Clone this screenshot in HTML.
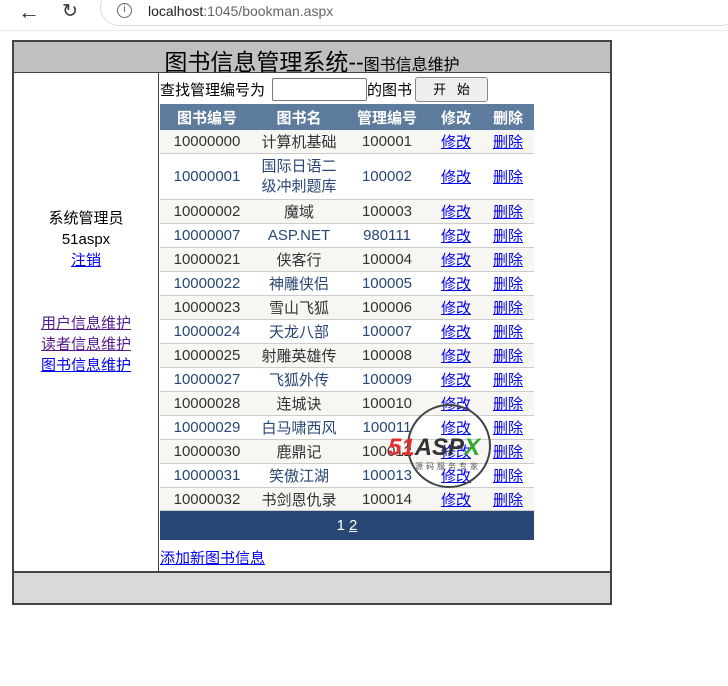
<!DOCTYPE html>
<html><head><meta charset="utf-8"><style>
*{margin:0;padding:0;box-sizing:border-box}
body{width:728px;height:686px;background:#fff;font-family:"Liberation Sans","Noto Sans CJK SC",sans-serif;font-size:15px;position:relative;overflow:hidden;color:#000}
.a{position:absolute}
a{color:#0000ee;text-decoration:underline}
.v{color:#551a8b}
.r{position:absolute;left:160px;width:374px;border-bottom:1px solid #ccc;display:flex;align-items:center}
.r span{display:block;text-align:center}
.c1{width:94px}.c2{width:90px;padding:0 4px}.c3{width:86px}.c4{width:52px}.c5{width:52px}
.o{background:#f7f6f3;color:#333}.e{background:#fff;color:#284775}
</style></head><body>
<div class="a" style="left:0;top:0;width:728px;height:30px;background:#fff"></div>
<div class="a" style="left:18px;top:-1px;font-size:22px;color:#333">&#8592;</div>
<div class="a" style="left:62px;top:0;font-size:19px;color:#333">&#8635;</div>
<div class="a" style="left:100px;top:-12px;width:640px;height:38px;border:1px solid #ddd;border-radius:19px;background:#fff"></div>
<div class="a" style="left:117px;top:3px;width:15px;height:15px;border:1.5px solid #666;border-radius:50%;font-size:10px;text-align:center;line-height:12px;color:#666">i</div>
<div class="a" style="left:148px;top:3px;font-size:14px;color:#222">localhost<span style="color:#666">:1045/bookman.aspx</span></div>
<div class="a" style="left:0;top:30px;width:728px;height:1px;background:#e8e8e8"></div>

<div class="a" style="left:12px;top:40px;width:600px;height:565px;border:2px solid #444;background:#fff"></div>
<div class="a" style="left:14px;top:42px;width:596px;height:31px;background:#c0c0c0;border-bottom:1px solid #444"></div>
<div class="a" style="left:14px;top:43px;width:596px;text-align:center;font-size:23px">图书信息管理系统--<span style="font-size:16px">图书信息维护</span></div>
<div class="a" style="left:158px;top:73px;width:1px;height:499px;background:#444"></div>
<div class="a" style="left:14px;top:571px;width:596px;height:32px;background:#d9d9d9;border-top:2px solid #444"></div>

<div class="a" style="left:14px;top:208px;width:144px;text-align:center;line-height:21px">系统管理员<br>51aspx<br><a href="#">注销</a></div>
<div class="a" style="left:14px;top:313px;width:144px;text-align:center;line-height:21px"><a class="v" href="#">用户信息维护</a><br><a class="v" href="#">读者信息维护</a><br><a href="#">图书信息维护</a></div>

<div class="a" style="left:160px;top:79px">查找管理编号为</div>
<div class="a" style="left:272px;top:78px;width:95px;height:23px;border:1px solid #777;border-radius:2px"></div>
<div class="a" style="left:367px;top:79px">的图书</div>
<div class="a" style="left:415px;top:77px;width:73px;height:25px;border:1px solid #888;border-radius:3px;background:#efefef;font-size:13px;text-align:center;line-height:23px">开&nbsp;&nbsp;&nbsp;始</div>

<div class="r" style="top:104px;height:26px;background:#5d7b9d;color:#fff;font-weight:bold;border:none"><span class="c1">图书编号</span><span class="c2">图书名</span><span class="c3">管理编号</span><span class="c4">修改</span><span class="c5">删除</span></div>
<div class="r o" style="top:130px;height:24px"><span class="c1">10000000</span><span class="c2">计算机基础</span><span class="c3">100001</span><span class="c4"><a href="#">修改</a></span><span class="c5"><a href="#">删除</a></span></div>
<div class="r e" style="top:154px;height:46px"><span class="c1">10000001</span><span class="c2" style="line-height:20px;padding:0 6px">国际日语二级冲刺题库</span><span class="c3">100002</span><span class="c4"><a href="#">修改</a></span><span class="c5"><a href="#">删除</a></span></div>
<div class="r o" style="top:200px;height:24px"><span class="c1">10000002</span><span class="c2">魔域</span><span class="c3">100003</span><span class="c4"><a href="#">修改</a></span><span class="c5"><a href="#">删除</a></span></div>
<div class="r e" style="top:224px;height:24px"><span class="c1">10000007</span><span class="c2">ASP.NET</span><span class="c3">980111</span><span class="c4"><a href="#">修改</a></span><span class="c5"><a href="#">删除</a></span></div>
<div class="r o" style="top:248px;height:24px"><span class="c1">10000021</span><span class="c2">侠客行</span><span class="c3">100004</span><span class="c4"><a href="#">修改</a></span><span class="c5"><a href="#">删除</a></span></div>
<div class="r e" style="top:272px;height:24px"><span class="c1">10000022</span><span class="c2">神雕侠侣</span><span class="c3">100005</span><span class="c4"><a href="#">修改</a></span><span class="c5"><a href="#">删除</a></span></div>
<div class="r o" style="top:296px;height:24px"><span class="c1">10000023</span><span class="c2">雪山飞狐</span><span class="c3">100006</span><span class="c4"><a href="#">修改</a></span><span class="c5"><a href="#">删除</a></span></div>
<div class="r e" style="top:320px;height:24px"><span class="c1">10000024</span><span class="c2">天龙八部</span><span class="c3">100007</span><span class="c4"><a href="#">修改</a></span><span class="c5"><a href="#">删除</a></span></div>
<div class="r o" style="top:344px;height:24px"><span class="c1">10000025</span><span class="c2">射雕英雄传</span><span class="c3">100008</span><span class="c4"><a href="#">修改</a></span><span class="c5"><a href="#">删除</a></span></div>
<div class="r e" style="top:368px;height:24px"><span class="c1">10000027</span><span class="c2">飞狐外传</span><span class="c3">100009</span><span class="c4"><a href="#">修改</a></span><span class="c5"><a href="#">删除</a></span></div>
<div class="r o" style="top:392px;height:24px"><span class="c1">10000028</span><span class="c2">连城诀</span><span class="c3">100010</span><span class="c4"><a href="#">修改</a></span><span class="c5"><a href="#">删除</a></span></div>
<div class="r e" style="top:416px;height:24px"><span class="c1">10000029</span><span class="c2">白马啸西风</span><span class="c3">100011</span><span class="c4"><a href="#">修改</a></span><span class="c5"><a href="#">删除</a></span></div>
<div class="r o" style="top:440px;height:24px"><span class="c1">10000030</span><span class="c2">鹿鼎记</span><span class="c3">100012</span><span class="c4"><a href="#">修改</a></span><span class="c5"><a href="#">删除</a></span></div>
<div class="r e" style="top:464px;height:24px"><span class="c1">10000031</span><span class="c2">笑傲江湖</span><span class="c3">100013</span><span class="c4"><a href="#">修改</a></span><span class="c5"><a href="#">删除</a></span></div>
<div class="r o" style="top:488px;height:23px"><span class="c1">10000032</span><span class="c2">书剑恩仇录</span><span class="c3">100014</span><span class="c4"><a href="#">修改</a></span><span class="c5"><a href="#">删除</a></span></div>
<div class="r" style="top:511px;height:29px;background:#284775;color:#fff;justify-content:center;border:none">1 <u style="margin-left:4px">2</u></div>

<div class="a" style="left:407px;top:404px;width:84px;height:84px;border:2.5px solid #444;border-radius:50%"></div>
<div class="a" style="left:388px;top:434px;font-size:24px;font-weight:bold;font-style:italic;color:#e03030">51<span style="color:#333">ASP</span><span style="color:#3a3">X</span></div>
<div class="a" style="left:415px;top:461px;font-size:8px;color:#555;letter-spacing:3px">源码服务专家</div>

<div class="a" style="left:160px;top:547px"><a href="#">添加新图书信息</a></div>
</body></html>
